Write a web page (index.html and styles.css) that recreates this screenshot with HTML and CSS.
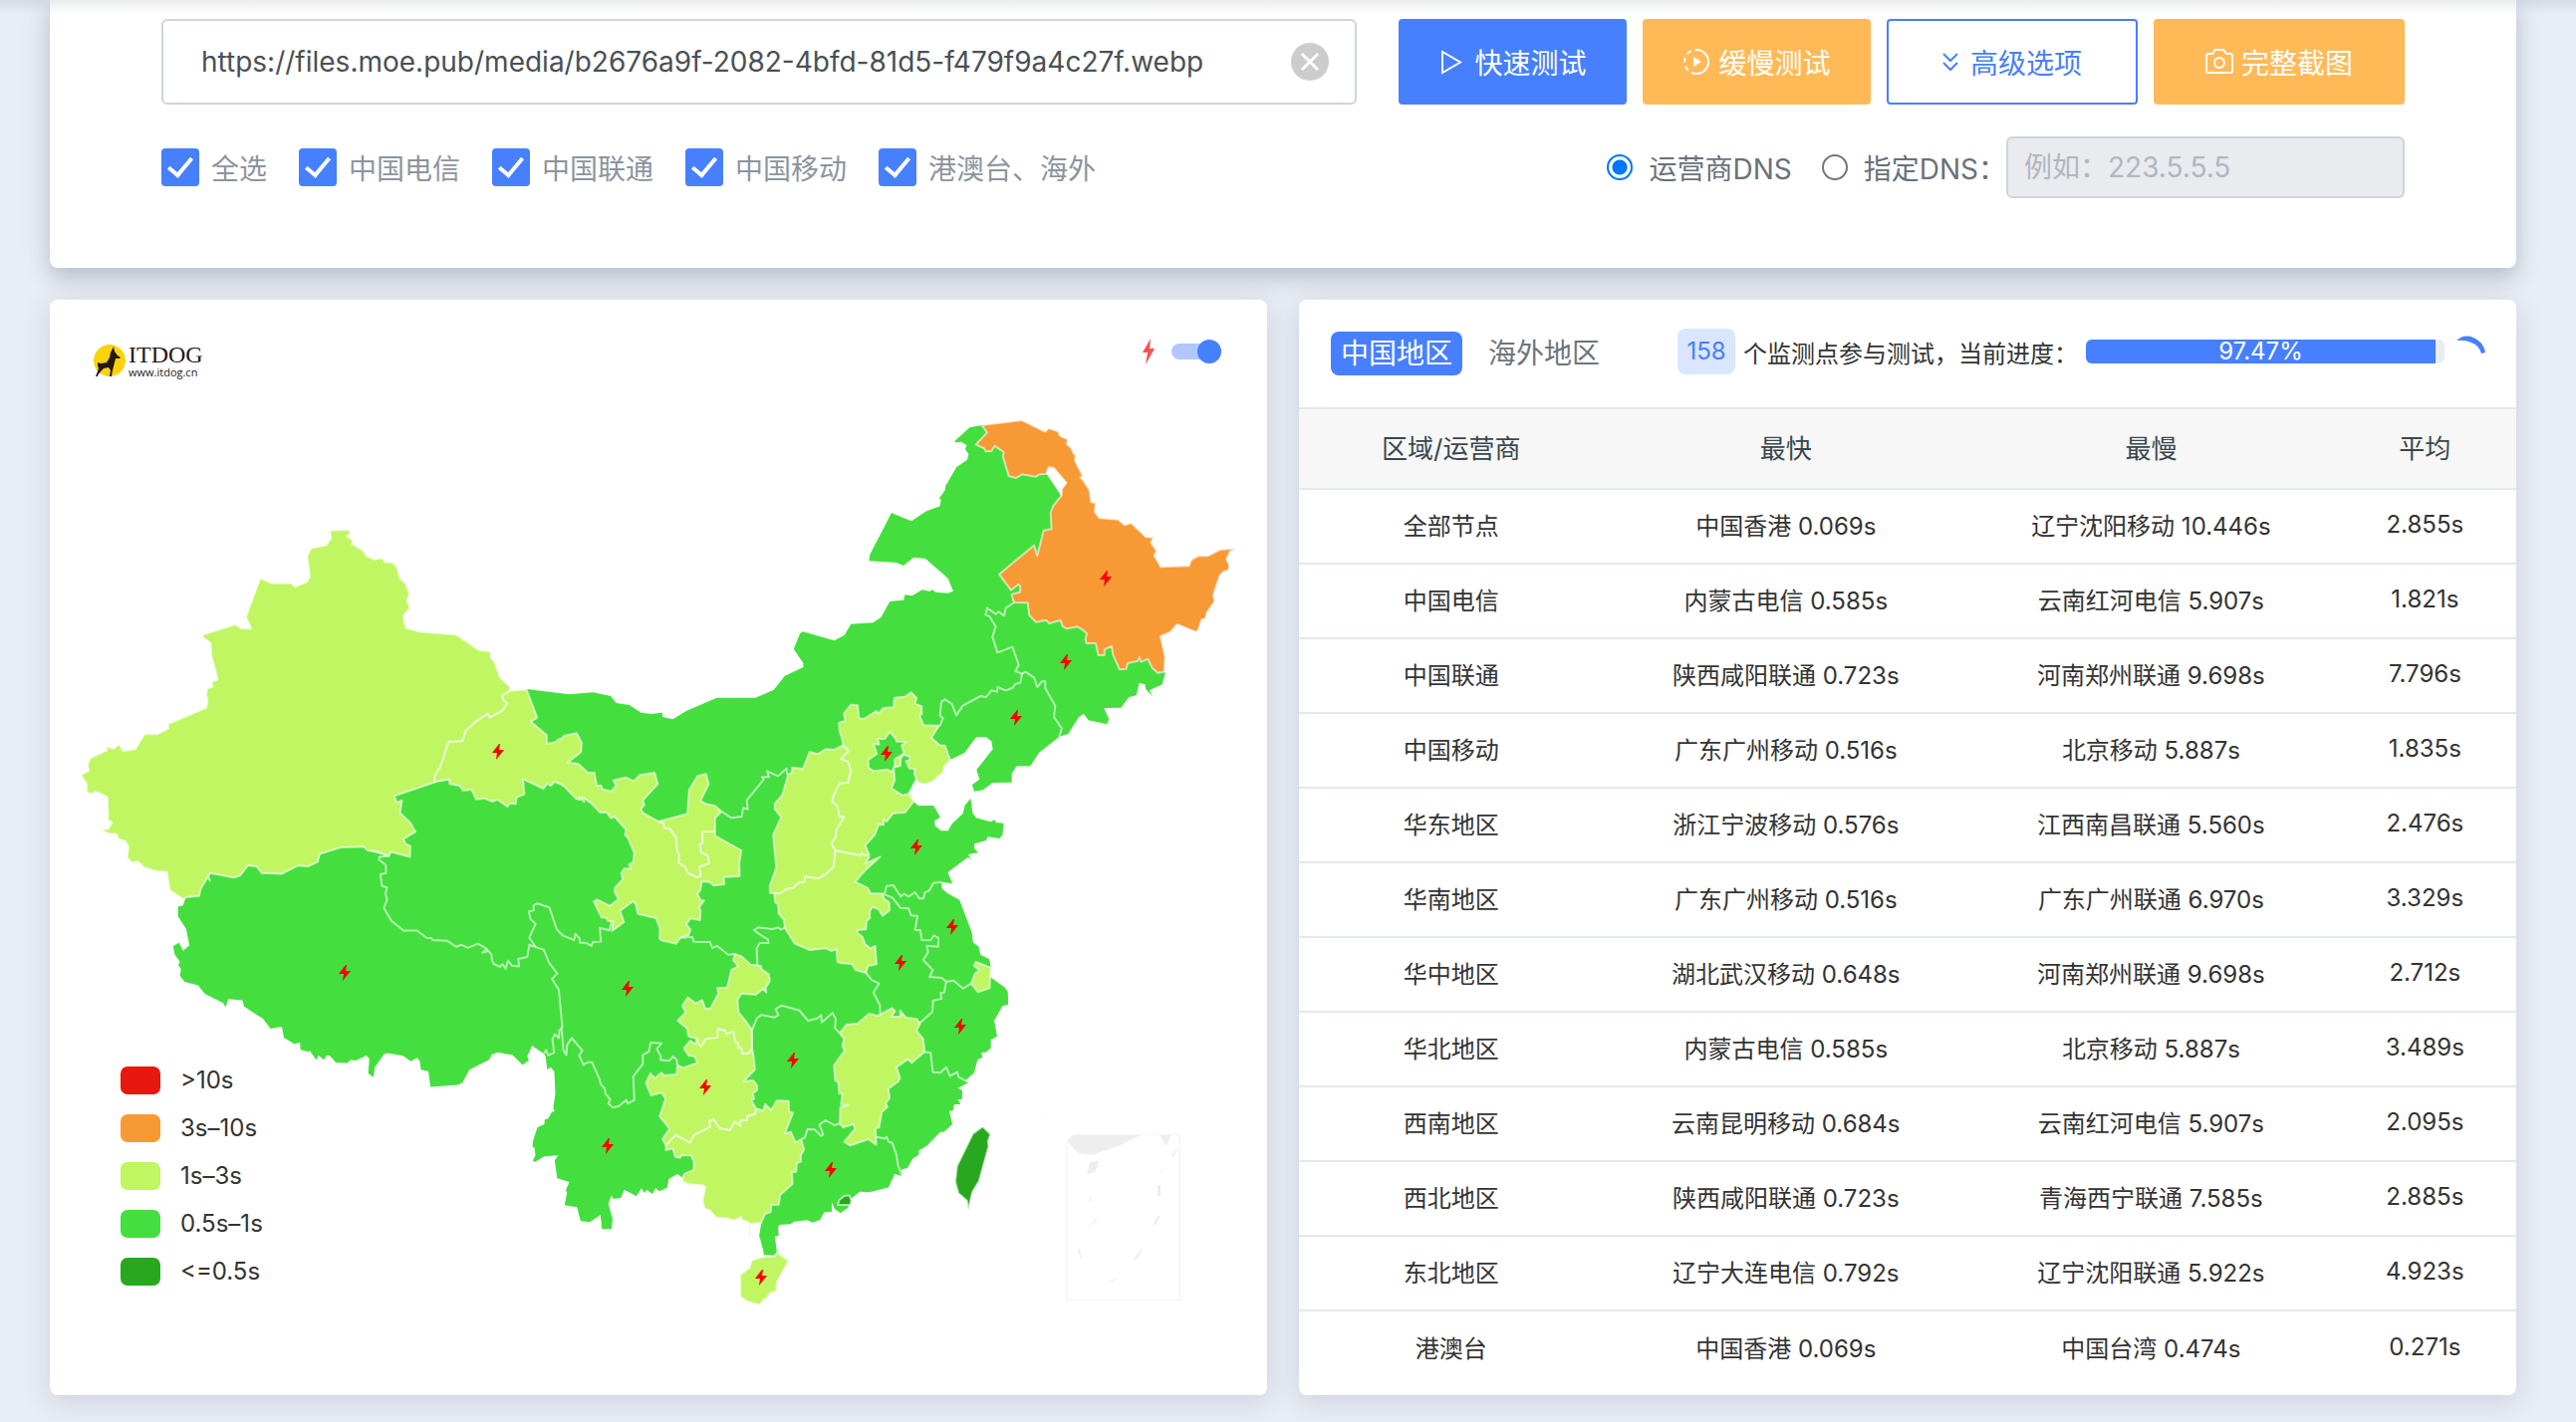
FILE: index.html
```html
<!DOCTYPE html>
<html lang="zh-CN">
<head>
<meta charset="utf-8">
<title>ITDOG - 网站测速</title>
<link rel="stylesheet" href="styles.css">
</head>
<body>
<div class="nav-shade"></div>
<main class="page">
  <form class="panel query">
    <div class="query-row">
      <div class="url-box">
        <input class="url-input" type="text" aria-label="网址" value="https://files.moe.pub/media/b2676a9f-2082-4bfd-81d5-f479f9a4c27f.webp">
        <button class="clear" type="button" aria-label="清除">
          <svg viewBox="0 0 38 38" width="38" height="38"><circle cx="19" cy="19" r="19" fill="#ccc"/><path d="M11 11L27 27M27 11L11 27" stroke="#fff" stroke-width="3"/></svg>
        </button>
      </div>
      <button class="btn btn-blue" type="button"><svg class="icon" viewBox="0 0 28 28"><path d="M4 4V25L22 14.500Z"/></svg>快速测试</button>
      <button class="btn btn-amber" type="button"><svg class="icon" viewBox="0 0 28 28"><path d="M14 2a12 12 0 0 1 0 24" /><path d="M14 26A12 12 0 0 1 14 2" stroke-dasharray="5 4"/><path d="M11 9v10l8-5z" fill="currentColor" stroke="none"/></svg>缓慢测试</button>
      <button class="btn btn-line" type="button"><svg class="icon icon-narrow" viewBox="6 0 20 28"><path d="M7 6l7 7 7-7M7 15l7 7 7-7"/></svg>高级选项</button>
      <button class="btn btn-amber" type="button"><svg class="icon" viewBox="0 0 28 28"><path d="M1 8q0-2 2-2h4l3-4h8l3 4h4q2 0 2 2v15q0 2-2 2H3q-2 0-2-2z"/><circle cx="14" cy="15" r="5"/></svg>完整截图</button>
    </div>
    <div class="option-row">
      <div class="checks">
        <label class="check"><input type="checkbox" checked>全选</label>
        <label class="check"><input type="checkbox" checked>中国电信</label>
        <label class="check"><input type="checkbox" checked>中国联通</label>
        <label class="check"><input type="checkbox" checked>中国移动</label>
        <label class="check"><input type="checkbox" checked>港澳台、海外</label>
      </div>
      <div class="dns">
        <label class="radio"><input type="radio" name="dns" checked>运营商DNS</label>
        <label class="radio"><input type="radio" name="dns">指定DNS：</label>
        <input class="dns-input" type="text" aria-label="DNS" placeholder="例如：223.5.5.5" disabled>
      </div>
    </div>
  </form>

  <div class="columns">
    <section class="card map-card">
      <svg class="map" viewBox="50 301 1222 1100" role="img" aria-label="中国地图">
        <defs>
          <path id="bolt" d="M1-8L-6 1H-1L-2 8L6-2H1L2-8Z"/>
        </defs>
        <g class="c-green">
          <path transform="translate(60 500) scale(.395408)" d="M1229 1412L1199 1391 1187 1418 1191 1428 1175 1440 1150 1415 1112 1408 1097 1414 1090 1427 1040 1452 1022 1486 1010 1491 941 1496 936 1456 917 1452 914 1430 907 1422 891 1431 872 1417 831 1410 823 1413 800 1446 796 1472 783 1461 786 1424 778 1416 752 1429 739 1427 730 1435 701 1434 685 1416 677 1416 671 1427 657 1416 651 1427 634 1403 632 1407 611 1402 610 1383 596 1387 569 1371 564 1343 535 1348 516 1323 468 1292 464 1276 428 1273 421 1293 414 1282 369 1260 351 1238 317 1229 305 1213 308 1196 301 1187 305 1178 292 1160 288 1138 303 1130 313 1150 329 1136 321 1095 300 1062 300 1038 313 1035 320 1014 354 1011 358 992 382 953 442 964 458 959 478 933 500 936 513 953 563 955 604 934 630 936 655 924 660 904 713 888 772 886 781 895 835 910 849 757 952 722 1100 700 1300 710 1568 900 1568 1500 1260 1450Z"/>
          <path transform="translate(480 620) scale(.357143 .333333)" d="M137 216L255 232 323 226 373 237 388 258 425 264 458 287 486 291 518 287 518 300 547 307 585 282 671 242 780 242 831 218 862 176 914 150 914 138 887 95 905 48 913 43 1001 70 1030 53 1048 20 1110 16 1132 0 1400 0 1300 330 1250 450 1231 488 1212 527 1224 555 1237 567 1280 567 1299 602 1283 613 1284 628 1301 643 1321 643 1332 622 1363 590 1368 567 1384 545 1390 590 1400 604 1440 616 1452 610 1456 618 1477 620 1474 655 1466 666 1432 661 1428 672 1395 682 1394 696 1406 708 1378 714 1385 732 1377 722 1320 768 1333 802 1302 797 1303 815 1318 830 1353 851 1388 950 1391 979 1407 992 1412 1016 1437 1030 1441 1055 1438 1120 1480 1115 1488 1128 1490 1166 1474 1168 1450 1215 1458 1262 1400 1300 200 1300 120 400 120 260Z"/>
          <path transform="translate(900 400) scale(.333333)" d="M-47 660L-20 612 0 610 22 608 25 592 47 595 77 577 100 581 109 577 118 584 154 587 171 581 155 542 87 483 52 479 21 504 0 495-83 490-80 470-15 345 0 352 45 370 90 340 131 325 134 304 127 304 146 277 148 263 181 207 213 185 217 168 207 153 211 141 195 131 176 133 176 128 220 88 257 81 400 150 500 300 700 450 780 720 809 828 800 862 762 880 771 898 751 877 748 862 731 857 722 895 700 900 676 932 625 933 640 967 634 982 578 970 564 950 549 960 517 1011 490 1019 429 1068 403 1108 362 1108 347 1130 347 1157 290 1158 260 1180 234 1184 228 1164 250 1148 241 1119 290 1057 286 1033 270 1021 240 1021 205 1068 163 1088 100 1050 0 1000-60 900Z"/>
          <path transform="translate(500 960) scale(.357143 .333333)" d="M1423 94L1432 106 1434 147 1418 150 1394 195 1402 241 1385 242 1385 278 1370 290 1358 292 1362 305 1348 312 1338 352 1314 375 1322 382 1292 398 1305 405 1304 432 1292 432 1300 446 1282 448 1279 465 1268 467 1277 507 1253 530 1243 530 1205 572 1183 586 1183 599 1166 610 1151 638 1133 644 1136 664 1115 656 1098 697 1045 712 1017 710 985 737 985 757 962 775 946 762 938 742 938 770 917 772 905 795 884 803 870 796 833 800 822 808 790 810 787 820 789 843 778 844 784 895 777 902 747 901 745 885 734 843 740 803 640 700 519 668 504 657 480 672 475 698 453 709 443 699 434 717 417 704 412 715 403 700 389 724 355 704 345 729 325 732 318 722 310 747 322 793 319 823 292 823 288 780 258 802 232 799 222 757 187 751 194 711 190 707 200 681 166 670 159 616 169 601 130 604 104 620 97 617 105 601 102 577 97 576 98 557 111 516 130 507 131 493 140 491 151 470 159 468 155 457 161 417 158 348 148 335 138 342 133 298 140 0 1300 0Z"/>
        </g>

        <g class="region c-lime" transform="translate(60 500) scale(.395408)">
          <path d="M686 83L736 81 737 92 728 97 744 107 742 117 768 132 778 147 797 156 818 153 825 163 844 164 856 176 863 203 879 219 888 244 881 261 889 280 873 298 873 312 880 331 915 340 1007 348 1065 387 1094 390 1094 405 1104 417 1118 457 1142 478 1144 490 1124 503 1127 514 1136 521 1124 540 1092 558 1087 548 1057 568 1031 592 1023 618 987 620 966 685 952 707 952 722 849 757 856 774 869 768 864 800 891 826 903 848 873 866 877 878 890 884 889 912 841 899 835 910 807 898 781 895 772 886 713 888 660 904 655 924 630 936 604 934 563 955 513 953 500 936 478 933 458 959 442 964 382 953 376 962 381 972 377 961 358 992 354 1011 320 1014 315 1020 279 996 272 950 240 947 214 938 198 923 184 926 171 914 175 886 166 871 149 867 145 854 124 852 104 843 123 841 133 825 121 816 123 810 121 760 90 745 82 752 70 750 68 738 69 727 54 704 74 693 71 676 78 661 120 641 117 631 136 637 152 625 160 643 192 638 215 600 249 600 276 585 275 574 372 533 375 517 372 496 375 484 388 480 385 468 401 461 385 400 383 368 363 355 363 348 446 321 461 332 486 332 473 302 509 204 538 217 588 217 597 226 627 214 635 200 628 147 639 128 677 120 689 102Z"/>
        </g>

        <g class="region c-lime" transform="translate(480 620) scale(.357143 .333333)">
          <path d="M90 221L68 237 72 250 82 258 70 280 33 302 27 290-6 314-35 342-44 373-83 375-107 452-122 478-122 496-81 487-80 502-52 507-42 522-18 519-6 548 18 545 40 555 54 549 82 570 90 560 106 562 108 542 130 533 126 487 184 516 194 501 204 507 216 495 240 507 276 547 287 549 284 541 298 556 292 541 318 560 343 588 361 587 373 605 383 600 416 640 413 655 421 665 439 709 436 738 424 744 430 757 410 757 402 772 407 788 385 814 384 829 395 848 370 869 334 850 325 856 347 904 361 905 364 914 379 916 377 944 410 918 399 884 436 855 443 864 449 893 500 906 511 937 510 968 515 973 557 983 568 965 592 957 597 941 585 924 597 907 624 912 625 882 621 874 635 853 626 852 616 833 624 823 629 795 650 797 662 808 692 804 690 782 735 780 734 740 740 702 666 658 666 645 630 645 630 680 622 684 626 708 645 718 649 741 621 751 626 778 613 783 590 770 582 752 563 738 566 717 559 702 557 664 540 637 523 633 522 620 507 615 463 589 458 577 467 565 463 551 505 502 496 468 454 475 438 493 414 482 380 491 388 506 375 524 350 518 345 506 333 507 327 468 308 467 281 441 252 437 289 406 291 378 277 349 240 357 234 367 228 366 217 376 193 381 193 355 148 314 166 302 136 217Z"/>
          <path d="M507 615L588 592 593 520 617 478 641 472 648 503 625 552 640 562 666 568 684 585 666 605 666 645 630 645 630 680 622 684 626 708 645 718 649 741 621 751 626 778 618 783 590 770 582 752 563 738 566 717 559 702 557 664 540 637 523 633 522 620Z"/>
          <path d="M883 452L913 456 932 405 954 412 977 397 1000 399 1025 386 1042 402 1020 426 1040 435 1048 462 1040 498 1016 500 998 540 996 556 1010 568 1016 600 1029 601 1006 643 1006 662 993 680 1004 702 1000 751 975 776 955 787 919 781 917 798 903 799 885 815 868 818 849 832 820 830 820 808 838 754 829 655 852 602 834 578 834 561 855 535 870 480 870 472 880 470Z"/>
          <path d="M1042 402L1025 382 1024 370 1016 343 1014 318 1032 311 1028 290 1048 263 1067 265 1070 303 1084 306 1119 282 1125 290 1139 273 1168 271 1170 242 1200 239 1217 226 1232 242 1229 260 1247 268 1247 292 1240 293 1252 325 1296 326 1274 362 1297 385 1312 386 1327 430 1310 450 1307 467 1278 494 1256 503 1238 498 1231 488 1222 500 1210 532 1225 553 1200 588 1167 590 1148 615 1140 607 1140 625 1126 624 1115 655 1088 687 1098 712 1087 718 1078 710 1074 718 1006 703 993 680 1006 662 1006 643 1029 601 1016 600 1010 568 996 556 998 540 1016 500 1040 498 1048 462 1040 435 1020 426Z"/>
          <path d="M1004 702L1074 718 1078 710 1087 718 1098 712 1099 722 1088 742 1130 721 1085 765 1060 797 1095 815 1103 832 1136 832 1141 848 1155 858 1157 882 1137 899 1126 880 1108 872 1101 885 1101 907 1092 915 1090 940 1066 942 1066 950 1080 962 1088 985 1103 997 1116 990 1120 1045 1096 1050 1090 1071 1062 1063 1050 1044 1022 1042 1010 1038 1007 998 994 1005 977 997 932 1002 890 983 862 935 860 912 845 893 843 866 835 858 832 832 849 832 868 818 885 815 903 799 917 798 919 781 955 787 975 776 1000 751Z"/>
          <path d="M1399 1038L1440 1055 1438 1117 1405 1129 1386 1103 1397 1072 1410 1064 1394 1050Z"/>
          <path d="M722 1014L740 1021 766 1046 795 1050 796 1060 817 1075 820 1095 808 1117 810 1130 801 1119 780 1137 740 1133 729 1152 732 1190 750 1213 768 1240 770 1297 760 1314 742 1314 738 1297 730 1298 730 1283 722 1280 717 1247 695 1258 690 1243 674 1240 674 1268 638 1272 630 1292 615 1290 617 1270 591 1262 587 1238 561 1215 583 1190 574 1170 589 1145 611 1163 630 1153 638 1178 653 1178 676 1132 672 1117 700 1115 712 1062 731 1051 717 1033Z"/>
        </g>
        <g class="region c-green" transform="translate(480 620) scale(.357143 .333333)">
          <path d="M1111 381L1127 383 1123 366 1143 366 1158 345 1173 365 1176 374 1203 375 1190 386 1197 408 1188 417 1171 427 1171 450 1162 466 1150 458 1112 463 1098 453 1096 430 1121 411Z"/>
          <path d="M1196 413L1213 420 1212 431 1203 432 1212 455 1228 457 1226 470 1232 487 1210 532 1192 536 1162 515 1171 490 1168 452 1187 447 1188 425Z"/>
        </g>

        <g class="region c-lime" transform="translate(500 960) scale(.357143 .333333)">
          <path d="M570 273L585 250 617 246 618 220 639 226 640 236 661 229 667 260 674 262 675 277 684 278 686 295 706 294 714 278 718 300 722 342 690 378 718 375 728 390 728 404 716 415 720 430 712 435 725 460 722 475 700 483 700 495 681 495 682 513 665 500 652 525 622 520 606 492 594 498 597 515 551 540 540 563 499 540 472 570 462 552 482 520 454 483 471 430 459 412 430 420 416 383 428 354 441 368 459 352 468 360 502 356 504 328 520 337 560 322 552 302 535 300 523 278 540 255 555 266 558 250 568 272Z"/>
          <path d="M472 570L499 540 540 563 551 540 597 515 594 498 606 492 622 520 652 525 665 500 682 513 681 495 700 495 700 483 722 478 728 460 745 466 751 447 768 464 783 436 817 437 818 468 829 473 806 535 823 530 836 562 852 552 860 584 851 600 851 620 840 624 838 650 826 652 828 686 793 720 789 749 768 750 766 772 750 777 740 803 708 808 710 843 705 840 705 803 685 795 682 786 664 797 641 789 614 789 597 768 580 760 575 735 583 697 575 691 535 688 519 679 519 668 524 656 550 645 551 622 543 601 515 601 512 608 498 605 491 580 472 585Z"/>
          <path d="M960 232L980 207 1010 204 1043 174 1068 180 1107 157 1116 166 1106 184 1131 182 1130 165 1147 186 1177 190 1186 205 1176 225 1195 250 1199 289 1163 322 1152 311 1120 335 1130 368 1125 378 1097 400 1101 428 1090 443 1094 455 1079 470 1071 516 1061 520 1063 569 1041 552 990 571 973 560 1004 520 998 507 970 516 960 505 962 455 985 449 964 447 968 415 959 415 956 380 948 376 944 330 974 285 968 270 973 250Z"/>
          <path d="M714 916L748 906 777 905 784 893 817 918 784 982 782 1010 765 1015 755 1032 747 1034 735 1052 700 1040 681 1027 681 960 706 940Z"/>
        </g>
        <g class="region c-dark" transform="translate(500 960) scale(.357143 .333333)">
          <path d="M1362 514L1384 537 1377 560 1379 573 1352 678 1333 712 1322 765 1318 737 1294 715 1285 680 1290 633 1335 535Z"/>
          <path d="M955 750L959 735 975 722 988 722 993 738 990 750Z"/>
        </g>
        <g class="region c-orange" transform="translate(900 400) scale(.333333)">
          <path d="M257 81L378 66 448 101 458 90 487 100 492 113 516 124 513 138 526 150 535 169 540 170 537 187 562 236 553 238 563 248 581 277 586 313 600 315 597 342 611 361 667 365 687 382 707 376 751 418 774 419 766 435 784 460 776 473 796 508 881 505 887 487 909 475 937 475 974 456 1021 452 1004 462 994 485 1003 505 998 520 985 522 973 535 954 592 958 612 935 645 930 664 919 667 908 700 900 703 845 681 825 704 795 717 809 780 806 824 787 827 770 812 757 785 737 794 731 780 727 791 696 798 692 815 672 817 652 772 648 747 626 757 626 774 608 774 600 738 572 738 569 726 573 709 560 697 545 688 513 694 500 687 494 668 460 678 450 668 420 674 400 654 395 616 354 615 346 591 372 584 373 567 367 560 345 578 309 530 414 443 424 475 443 398 467 394 464 345 472 324 497 293 498 273 512 255 473 209 458 208 450 228 430 229 420 236 378 229 360 240 338 234 320 174 323 162 295 143 286 159 269 160 264 151 239 139 273 103Z"/>
        </g>

        <g class="border" transform="translate(60 500) scale(.395408)">
          <path d="M835 910L811 912 811 920 828 932 828 953 814 956 818 985 831 990 827 1005 831 1020 823 1042 842 1074 873 1099 907 1099 932 1118 943 1118 947 1123 984 1125 1006 1140 1020 1135 1036 1143 1062 1132 1085 1146 1073 1155 1088 1150 1096 1160 1097 1173 1101 1183 1117 1191 1124 1184 1132 1196 1138 1175 1148 1188 1166 1190 1164 1171 1187 1166 1192 1135 1229 1148 1242 1180 1263 1208 1250 1222 1267 1249 1276 1345 1268 1353 1267 1372 1257 1362 1251 1375 1255 1409 1240 1416 1235 1402 1229 1412"/>
          <path d="M1208 1140L1192 1117 1208 1082 1195 1070 1191 1050 1203 1048 1203 1035 1212 1030 1243 1040 1262 1096 1278 1112 1306 1123 1309 1107 1319 1118 1321 1130 1336 1130 1350 1138 1353 1128 1374 1127 1371 1092 1396 1098 1400 1077"/>
        </g>
        <g class="border" transform="translate(480 620) scale(.357143 .333333)">
          <path d="M685 585L712 604 741 600 745 574 758 578 755 551 803 488 798 481 818 481 812 463 843 478 867 455 868 472"/>
          <path d="M568 965L602 963 606 977 652 978 658 996 672 990 703 1016 722 1014"/>
          <path d="M785 1050L783 996 792 981 816 981 815 971 792 955 775 942 787 934 828 939 845 934 850 941 862 935"/>
          <path d="M1090 1071L1106 1092 1127 1103 1111 1130 1129 1167 1130 1193"/>
          <path d="M1143 832L1148 809 1167 807 1188 841 1196 833 1210 841 1228 828 1240 847 1252 847 1255 830 1268 823 1280 800 1302 797"/>
          <path d="M1136 832L1165 845 1187 875 1210 877 1217 898 1235 900 1228 942 1243 942 1247 972 1272 973 1281 958 1294 966 1293 992 1261 989 1265 1008 1251 1032 1278 1062 1269 1083 1303 1086 1316 1097 1337 1094 1363 1118 1386 1103"/>
          <path d="M1316 1097L1310 1130 1300 1131 1303 1149 1279 1154 1277 1188 1240 1223"/>
        </g>
        <g class="border" transform="translate(500 960) scale(.357143 .333333)">
          <path d="M178 215L184 285 192 298 194 268 207 247 237 285 228 300 240 328 252 320 264 320 285 370 288 385 300 400 302 415 315 432 310 445 323 457 338 453 361 434 364 445 383 434 380 363 407 325 407 298 424 288 429 261 460 263 446 280 458 303 456 313 481 316 492 303 502 312 504 328"/>
          <path d="M1199 289L1216 292 1222 350 1243 352 1260 335 1270 362 1290 350 1295 365 1325 382"/>
          <path d="M1063 545L1087 550 1092 545 1098 560 1108 563 1120 600 1124 630 1136 664"/>
          <path d="M714 278L714 222 728 187 740 178 778 185 788 178 780 160 797 149 847 164 871 195 897 188 908 178 910 200 940 172 949 190 947 218 960 232"/>
          <path d="M852 552L862 548 870 522 890 523 908 542 914 538 903 508 921 495 945 510 960 505"/>
        </g>
        <g class="border" transform="translate(900 400) scale(.333333)">
          <path d="M354 615L329 632 324 655 308 643 299 650 273 632 268 652 280 657 299 688 289 718 304 766 349 749 368 803 358 822 378 830 373 857 359 860 348 873 329 880 304 870 303 884 286 880 270 900 253 897 200 926 180 955 167 921 146 907 135 914 131 957 140 964 130 987"/>
          <path d="M378 830L388 824 414 841 424 870 438 853 448 853 448 873 478 927 474 960 498 995 490 1019"/>
        </g>

        <g transform="translate(1060 1125) scale(.333333)" fill="#eee">
          <path d="M33 62L54 43H258L190 77 110 104 68 99Z"/>
          <path d="M312 43H347L332 79Z"/>
          <path d="M102 128L131 122 118 155 92 164Z"/>
          <path d="M347 108L368 80 356 108ZM313 162L329 136 320 156ZM306 196h9v33h-9zM97 214L110 249 105 246ZM97 327L117 297 126 297ZM292 315L306 288 314 288 299 316ZM64 388H71L78 417H74ZM233 421L266 376 242 421ZM157 485L191 472 170 485Z"/>
          <path d="M33 62L54 43H373V541H33Z" fill="none" stroke="#f5f5f5" stroke-width="4"/>
          <path d="M-38 0L-33-5V0Z"/>
        </g>
        <g fill="#f00">
          <use href="#bolt" x="1110" y="581"/><use href="#bolt" x="1070" y="665"/><use href="#bolt" x="1020" y="721"/><use href="#bolt" x="890" y="757"/>
          <use href="#bolt" x="500" y="755"/><use href="#bolt" x="920" y="851"/><use href="#bolt" x="956" y="931"/><use href="#bolt" x="904" y="967"/>
          <use href="#bolt" x="964" y="1031"/><use href="#bolt" x="346" y="977"/><use href="#bolt" x="630" y="993"/><use href="#bolt" x="796" y="1065"/>
          <use href="#bolt" x="708" y="1092"/><use href="#bolt" x="610" y="1151"/><use href="#bolt" x="834" y="1175"/><use href="#bolt" x="764" y="1283"/>
        </g>
      </svg>
      <header class="map-head">
        <a class="logo" href="#">
          <svg viewBox="0 0 34 34" width="34" height="34"><circle cx="17" cy="17" r="16" fill="#fcd20d"/><path d="M21 3L22 8 25 12 28 14 27 15H23L22 19 21 23 20 27 19 32V33H17L18 27 16 24 11 25 8 28 5 32V33H3L5 28 6 25 5 22V19L8 20 14 19 17 14 18 9Z" fill="#231815"/></svg>
          <span class="logo-text"><span class="logo-name">ITDOG</span><span class="logo-url">www.itdog.cn</span></span>
        </a>
        <label class="live">
          <svg viewBox="-7 -14 14 28" width="14" height="28"><path d="M2-13L-6 1H-1L-3 13L6-3H1Z" fill="#ff4f4f"/></svg>
          <input class="switch" type="checkbox" role="switch" aria-label="实时闪电标记" checked>
        </label>
      </header>
      <ul class="legend">
        <li><i class="swatch red"></i>&gt;10s</li>
        <li><i class="swatch orange"></i>3s–10s</li>
        <li><i class="swatch lime"></i>1s–3s</li>
        <li><i class="swatch green"></i>0.5s–1s</li>
        <li><i class="swatch dark"></i>&lt;=0.5s</li>
      </ul>
    </section>

    <section class="card">
      <header class="result-head">
        <button class="tab active" type="button">中国地区</button>
        <button class="tab" type="button">海外地区</button>
        <div class="progress-line">
          <span class="badge">158</span>
          <span>个监测点参与测试，当前进度：</span>
          <div class="bar"><div class="bar-fill" style="width:97.47%">97.47%</div></div>
          <svg class="spinner" viewBox="0 0 30 36" width="30" height="36"><path d="M0 7Q8 0 17 4Q27 8 29 19L25 20Q23 12 15 9Q8 6 0 7Z" fill="#4680ff"/></svg>
        </div>
      </header>
      <table class="results">
        <thead><tr><th class="c-area">区域/运营商</th><th class="c-fast">最快</th><th class="c-slow">最慢</th><th class="c-avg">平均</th></tr></thead>
        <tbody>
          <tr><td>全部节点</td><td>中国香港 0.069s</td><td>辽宁沈阳移动 10.446s</td><td>2.855s</td></tr>
          <tr><td>中国电信</td><td>内蒙古电信 0.585s</td><td>云南红河电信 5.907s</td><td>1.821s</td></tr>
          <tr><td>中国联通</td><td>陕西咸阳联通 0.723s</td><td>河南郑州联通 9.698s</td><td>7.796s</td></tr>
          <tr><td>中国移动</td><td>广东广州移动 0.516s</td><td>北京移动 5.887s</td><td>1.835s</td></tr>
          <tr><td>华东地区</td><td>浙江宁波移动 0.576s</td><td>江西南昌联通 5.560s</td><td>2.476s</td></tr>
          <tr><td>华南地区</td><td>广东广州移动 0.516s</td><td>广东广州联通 6.970s</td><td>3.329s</td></tr>
          <tr><td>华中地区</td><td>湖北武汉移动 0.648s</td><td>河南郑州联通 9.698s</td><td>2.712s</td></tr>
          <tr><td>华北地区</td><td>内蒙古电信 0.585s</td><td>北京移动 5.887s</td><td>3.489s</td></tr>
          <tr><td>西南地区</td><td>云南昆明移动 0.684s</td><td>云南红河电信 5.907s</td><td>2.095s</td></tr>
          <tr><td>西北地区</td><td>陕西咸阳联通 0.723s</td><td>青海西宁联通 7.585s</td><td>2.885s</td></tr>
          <tr><td>东北地区</td><td>辽宁大连电信 0.792s</td><td>辽宁沈阳联通 5.922s</td><td>4.923s</td></tr>
          <tr><td>港澳台</td><td>中国香港 0.069s</td><td>中国台湾 0.474s</td><td>0.271s</td></tr>
        </tbody>
      </table>
    </section>
  </div>
</main>
</body>
</html>
```
FILE: styles.css
```css
* { box-sizing: border-box; }
body {
  margin: 0;
  background: #e9edf5;
  color: #333;
  font-family: Inter, "Noto Sans CJK SC", sans-serif;
  font-size: 24px;
}
button, input { font: inherit; color: inherit; margin: 0; }
button { cursor: pointer; }

.nav-shade {
  position: relative;
  z-index: 1;
  height: 14px;
  margin-bottom: -14px;
  background: linear-gradient(rgba(40, 60, 80, .1), rgba(40, 60, 80, 0));
}
.page { padding: 0 60px 27px 50px; }

/* query panel */
.panel {
  background: #fff;
  border-radius: 0 0 8px 8px;
  padding: 19px 112px 70px;
  box-shadow: 0 10px 20px rgba(50, 75, 95, .22), 0 4px 36px rgba(50, 75, 95, .08);
}
.query-row {
  display: grid;
  grid-template-columns: minmax(0, 1fr) 229px 229px 252px 252px;
  column-gap: 16px;
}
.url-box {
  display: flex;
  align-items: center;
  height: 86px;
  margin-right: 26px;
  padding: 0 26px 0 38px;
  border: 2px solid #cfd4de;
  border-radius: 6px;
}
.url-input {
  flex: 1;
  min-width: 0;
  height: 64px;
  padding: 0;
  border: 0;
  outline: 0;
  background: none;
  color: #495057;
  font-size: 28px;
}
.clear { display: flex; padding: 0; border: 0; background: none; }
.btn {
  display: flex;
  align-items: center;
  justify-content: center;
  gap: 8px;
  padding: 0;
  border: 2px solid transparent;
  border-radius: 4px;
  font-size: 28px;
  color: #fff;
}
.btn-blue { background: #4680ff; }
.btn-amber { background: #ffba57; }
.btn-line { background: #fff; border-color: #4680ff; color: #4680ff; }
.icon { width: 28px; height: 28px; fill: none; stroke: currentColor; stroke-width: 2; }
.icon-narrow { width: 20px; }

.option-row {
  display: flex;
  justify-content: space-between;
  align-items: center;
  margin-top: 32px;
  font-size: 28px;
}
.checks { display: flex; gap: 32px; color: #8c959e; }
.check { display: flex; align-items: center; gap: 12px; }
.check input {
  appearance: none;
  width: 38px;
  height: 38px;
  border-radius: 4px;
  background: #4680ff;
  display: grid;
  place-items: center;
}
.check input::after {
  content: "";
  width: 10px;
  height: 20px;
  margin-bottom: 6px;
  border: solid #fff;
  border-width: 0 4px 4px 0;
  transform: rotate(40deg);
}
.dns { display: flex; align-items: center; color: #69717b; }
.radio { display: flex; align-items: center; gap: 16px; margin-right: 30px; }
.radio + .radio { margin-right: 0; }
.radio input {
  appearance: none;
  width: 26px;
  height: 26px;
  border: 2px solid #767676;
  border-radius: 50%;
}
.radio input:checked {
  border-color: #0075ff;
  background: radial-gradient(circle, #0075ff 7px, #fff 8px);
}
.dns-input {
  width: 400px;
  height: 62px;
  padding: 0 16px;
  border: 2px solid #cfd4de;
  border-radius: 6px;
  background: #e9ebef;
}
.dns-input::placeholder { color: #b0b7bf; opacity: 1; }

/* cards */
.columns {
  display: grid;
  grid-template-columns: minmax(0, 1fr) minmax(0, 1fr);
  gap: 32px;
  margin-top: 32px;
}
.card {
  background: #fff;
  border-radius: 8px;
  box-shadow: 0 6px 28px rgba(60, 80, 110, .18);
}

/* map: picture, header and legend share one grid cell */
.map-card { display: grid; align-items: start; }
.map-card > * { grid-area: 1 / 1; }
.map { display: block; width: 100%; }
.c-green { fill: #44df3e; }
.c-lime { fill: #bff662; }
.c-dark { fill: #27a81f; }
.c-orange { fill: #f79935; }
.region path, .border path {
  stroke: rgba(255, 255, 255, .6);
  stroke-width: 2px;
  stroke-linejoin: round;
  vector-effect: non-scaling-stroke;
}
.border { fill: none; }
.map-head {
  display: flex;
  justify-content: space-between;
  align-items: flex-start;
  padding: 38px 46px 0 43px;
}
.logo { display: flex; align-items: center; gap: 2px; color: #231815; text-decoration: none; margin-top: 5px; }
.logo-text { display: flex; flex-direction: column; }
.logo-name { font: 24px/24px "Liberation Serif", serif; }
.logo-url { font: 11px/11px "Open Sans", sans-serif; }
.live { display: flex; align-items: center; gap: 16px; }
.switch {
  appearance: none;
  display: flex;
  align-items: center;
  justify-content: flex-end;
  width: 50px;
  height: 16px;
  border-radius: 8px;
  background: #b0c8ff;
}
.switch::after {
  content: "";
  width: 24px;
  height: 24px;
  border-radius: 50%;
  background: #4680ff;
}
.legend {
  display: grid;
  gap: 20px;
  align-self: end;
  margin: 0 0 110px;
  padding: 0 0 0 71px;
  list-style: none;
  line-height: 28px;
  justify-self: start;
}
.legend li { display: flex; align-items: center; gap: 20px; }
.swatch { width: 40px; height: 28px; border-radius: 7px; }
.red { background: #e6180f; }
.orange { background: #f79935; }
.lime { background: #bff662; }
.green { background: #44df3e; }
.dark { background: #27a81f; }

/* results */
.result-head {
  display: flex;
  align-items: center;
  gap: 16px;
  height: 108px;
  padding: 0 30px 0 32px;
}
.tab {
  height: 44px;
  padding: 0 10px;
  border: 0;
  border-radius: 8px;
  background: none;
  color: #6c757d;
  font-size: 28px;
  line-height: 44px;
  white-space: nowrap;
}
.tab.active { background: #4680ff; color: #fff; }
.progress-line {
  display: flex;
  align-items: center;
  flex: 1;
  gap: 8px;
  margin: 0 0 4px 52px;
  white-space: nowrap;
}
.badge {
  width: 58px;
  border-radius: 8px;
  background: #dae5ff;
  color: #4680ff;
  line-height: 46px;
  text-align: center;
}
.bar { flex: 1; height: 24px; border-radius: 6px; background: #e9ecf2; }
.bar-fill {
  border-radius: 6px 0 0 6px;
  background: #4680ff;
  color: #fff;
  text-align: center;
  line-height: 24px;
}
.spinner { margin-left: 4px; }
.results { width: 100%; border-collapse: collapse; table-layout: fixed; text-align: center; }
.results th {
  height: 81px;
  padding: 0 0 4px;
  border-top: 2px solid #e2e8ee;
  border-bottom: 2px solid #e2e8ee;
  background: #f7f7f7;
  color: #37474f;
  font-size: 26px;
  font-weight: 400;
}
.results td { height: 75px; padding: 0 0 4px; border-bottom: 2px solid #e2e8ee; }
.results tbody tr:last-child td { border-bottom: 0; }
.c-area { width: 25%; }
.results .c-fast, .results .c-slow { width: 30%; }
.c-avg { width: 15%; }
```
